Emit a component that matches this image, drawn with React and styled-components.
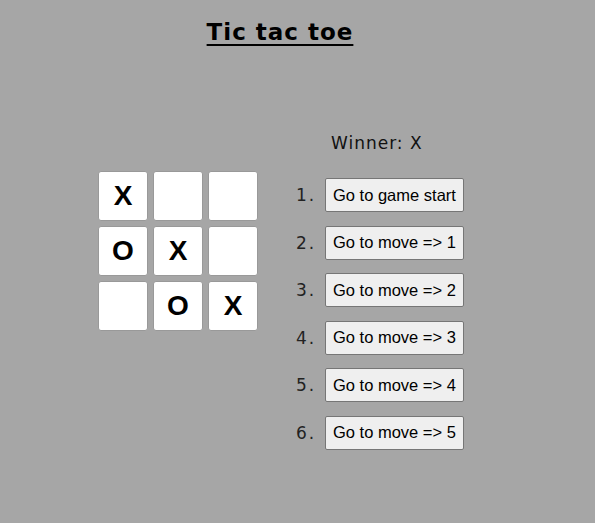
import React from "react";
import styled, { createGlobalStyle } from "styled-components";

const GlobalStyle = createGlobalStyle`
  html, body {
    margin: 0;
    background: #a6a6a6;
  }
  body {
    font-family: "DejaVu Sans", sans-serif;
  }
`;

const squares = ["X", null, null, "O", "X", null, null, "O", "X"];
const moves = [
  "Go to game start",
  "Go to move => 1",
  "Go to move => 2",
  "Go to move => 3",
  "Go to move => 4",
  "Go to move => 5",
];

const Page = styled.div`
  width: 560px;
  padding-top: 19px;
`;

const Title = styled.h1`
  margin: 0;
  text-align: center;
  font-family: "DejaVu Sans", sans-serif;
  font-size: 23px;
  font-weight: bold;
  letter-spacing: 1px;
  text-decoration: underline;
  text-decoration-thickness: 2px;
  text-underline-offset: 4px;
  color: #000;
`;

const Game = styled.div`
  display: flex;
  padding: 0 0 0 98px;
  margin-top: 82px;
`;

const Board = styled.div`
  display: grid;
  grid-template-columns: repeat(3, 50px);
  grid-auto-rows: 50px;
  gap: 5px;
  margin-top: 44px;
`;

const Square = styled.button`
  box-sizing: border-box;
  border: 1px solid #999;
  border-radius: 3px;
  background: #fff;
  padding: 0;
  font-family: "Liberation Sans", Arial, sans-serif;
  font-size: 28px;
  font-weight: bold;
  color: #000;
`;

const Info = styled.div`
  margin-left: 38px;
  margin-top: 6px;
`;

const Status = styled.div`
  font-family: "DejaVu Sans", sans-serif;
  font-size: 17px;
  letter-spacing: 1px;
  color: #111;
  margin-left: 35px;
  height: 45px;
`;

const List = styled.ol`
  margin: 0;
  padding-left: 0;
  list-style: none;
  display: flex;
  flex-direction: column;
  gap: 13.6px;
`;

const Item = styled.li`
  display: flex;
  align-items: center;
  font-family: "DejaVu Sans", sans-serif;
  font-size: 17px;
  color: #222;
`;

const Num = styled.span`
  width: 29px;
  letter-spacing: 2px;
`;

const MoveButton = styled.button`
  box-sizing: border-box;
  height: 34px;
  padding: 0 7px;
  font-family: "Liberation Sans", Arial, sans-serif;
  font-size: 16.5px;
  color: #000;
  background: #efefef;
  border: 1px solid #767676;
  border-radius: 2px;
`;

export default function App() {
  return (
    <>
      <GlobalStyle />
      <Page>
        <Title>Tic tac toe</Title>
        <Game>
          <Board>
            {squares.map((v, i) => (
              <Square key={i}>{v}</Square>
            ))}
          </Board>
          <Info>
            <Status>Winner: X</Status>
            <List>
              {moves.map((m, i) => (
                <Item key={m}>
                  <Num>{i + 1}.</Num>
                  <MoveButton>{m}</MoveButton>
                </Item>
              ))}
            </List>
          </Info>
        </Game>
      </Page>
    </>
  );
}
